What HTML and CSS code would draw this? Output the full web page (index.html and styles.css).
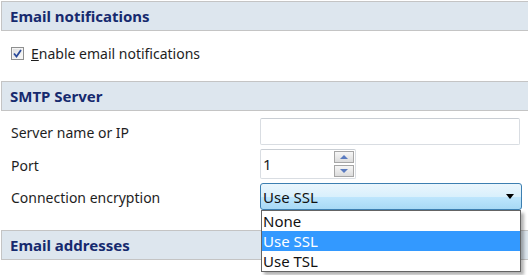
FILE: index.html
```html
<!DOCTYPE html>
<html lang="en">
<head>
  <meta charset="UTF-8">
  <title>Email settings</title>
  <link rel="stylesheet" href="styles.css">
</head>
<body>
  <div class="panel">
    <h2 class="section-head">Email notifications</h2>
    <div class="section-body">
      <label class="check-row">
        <span class="checkbox">
          <svg width="9" height="9" viewBox="0 0 9 9">
            <path d="M1 4.5 L3.5 7.5 L8 1" fill="none" stroke="#2a4a9a" stroke-width="1.8"/>
          </svg>
        </span>
        <span><u>E</u>nable email notifications</span>
      </label>
    </div>

    <h2 class="section-head">SMTP Server</h2>
    <div class="form-grid">
      <label>Server name or IP</label>
      <div class="textbox wide"></div>

      <label>Port</label>
      <div class="textbox spin">
        <span class="spin-value">1</span>
        <span class="spin-btns">
          <span class="spin-btn"><i class="tri up"></i></span>
          <span class="spin-btn"><i class="tri down"></i></span>
        </span>
      </div>

      <label>Connection encryption</label>
      <div class="combo-wrap">
        <div class="combo">
          <span>Use SSL</span>
          <i class="combo-arrow"></i>
        </div>
        <ul class="dropdown">
          <li>None</li>
          <li class="selected">Use SSL</li>
          <li>Use TSL</li>
        </ul>
      </div>
    </div>

    <h2 class="section-head">Email addresses</h2>
  </div>
</body>
</html>
```

FILE: styles.css
```css
:root {
  --head-bg: #dde6ee;
  --head-border: #c4c4c4;
  --head-text: #162a6e;
  --text: #1e1e1e;
}

html, body {
  min-height: 275px;
}

body {
  margin: 0;
  padding: 0;
  background: #fff;
  font-family: "Noto Sans", "DejaVu Sans", sans-serif;
  font-size: 14px;
  color: var(--text);
}

.panel {
  padding-top: 1px;
}

.section-head {
  margin: 0 0 0 1px;
  height: 28px;
  line-height: 28px;
  padding-left: 8px;
  font-size: 15px;
  font-weight: 700;
  color: var(--head-text);
  background: var(--head-bg);
  border: 1px solid var(--head-border);
  border-right: none;
}

.section-body {
  height: 37px;
  padding: 13px 0 0 11px;
}

.check-row {
  display: flex;
  align-items: center;
  gap: 7px;
}

.checkbox {
  width: 11px;
  height: 11px;
  border: 1px solid #8e8f8f;
  background: linear-gradient(135deg, #dcdcdc, #fbfbfb);
  box-shadow: inset 0 0 0 1px #f4f4f4;
  display: flex;
  align-items: center;
  justify-content: center;
}

.form-grid {
  display: grid;
  grid-template-columns: 249px 261px;
  align-items: center;
  row-gap: 4px;
  padding: 7px 0 20px 11px;
}

.form-grid label {
  padding-top: 2px;
}

.textbox {
  box-sizing: border-box;
  height: 27px;
  border: 1px solid #d9dde2;
  border-top-color: #c9ced4;
  border-radius: 2px;
  background: #fff;
}

.textbox.wide {
  width: 260px;
}

.spin {
  width: 96px;
  height: 30px;
  display: flex;
  align-items: center;
  justify-content: space-between;
  padding: 0 1px 0 2px;
}

.spin-value {
  font-size: 15px;
  color: #222;
}

.spin-btns {
  display: flex;
  flex-direction: column;
  gap: 2px;
}

.spin-btn {
  box-sizing: border-box;
  width: 20px;
  height: 12px;
  border: 1px solid #a6a6a6;
  background: linear-gradient(#f6f6f6, #dcdcdc);
  display: flex;
  align-items: center;
  justify-content: center;
}

.tri {
  width: 0;
  height: 0;
  border-left: 4px solid transparent;
  border-right: 4px solid transparent;
}

.tri.up {
  border-bottom: 4px solid #5a7bc0;
}

.tri.down {
  border-top: 4px solid #5a7bc0;
}

.combo-wrap {
  position: relative;
}

.combo {
  box-sizing: border-box;
  height: 27px;
  width: 262px;
  border: 1px solid #3c7fb1;
  border-radius: 3px;
  background: linear-gradient(#eaf6fd 0%, #d9f0fc 50%, #bee6fd 51%, #a7d9f5 100%);
  display: flex;
  align-items: center;
  justify-content: space-between;
  padding: 0 7px 0 2px;
  font-size: 15px;
  color: #111;
}

.combo-arrow {
  width: 0;
  height: 0;
  border-left: 4px solid transparent;
  border-right: 4px solid transparent;
  border-top: 5px solid #000;
}

.dropdown {
  position: absolute;
  top: 27px;
  left: 1px;
  width: 258px;
  margin: 0;
  padding: 0;
  list-style: none;
  background: #fff;
  border: 1px solid #646464;
  box-shadow: 3px 3px 3px rgba(0, 0, 0, 0.3);
  font-size: 15px;
  z-index: 2;
}

.dropdown li {
  height: 20px;
  line-height: 20px;
  padding-left: 1px;
  color: #111;
}

.dropdown li.selected {
  background: #3399ff;
  color: #fff;
}
```
